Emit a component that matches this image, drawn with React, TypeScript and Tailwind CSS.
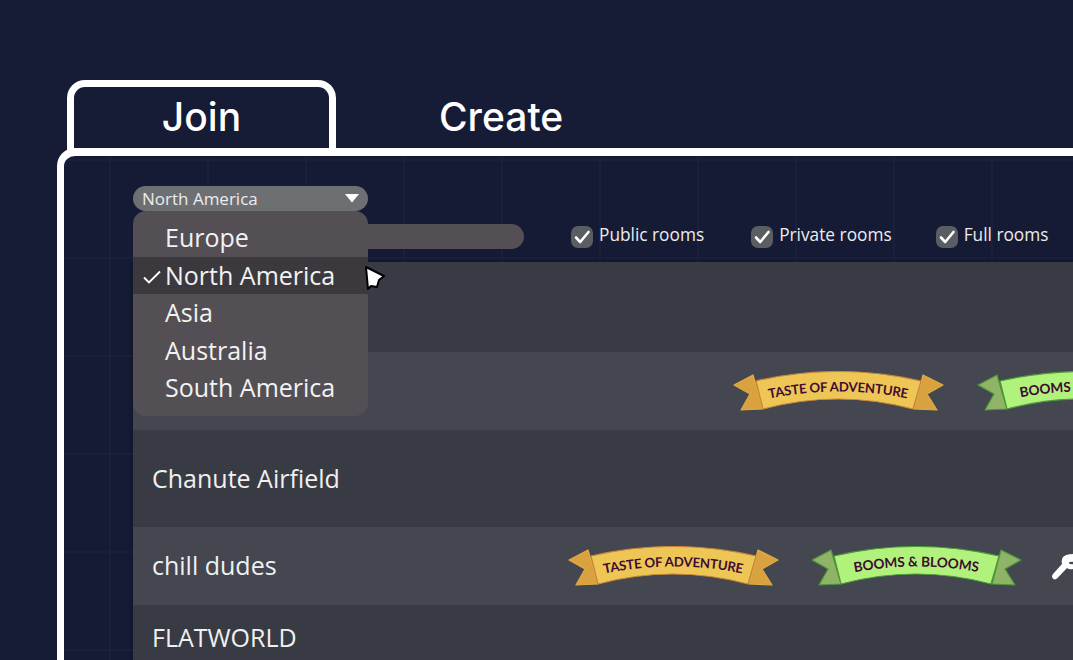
const regions = ["Europe", "North America", "Asia", "Australia", "South America"];

function Banner({ label, green, id }: { label: string; green?: boolean; id: string }) {
  const tail = green ? "#8fb468" : "#d9a23f";
  const tailEdge = green ? "#4f9638" : "#e0ab45";
  const main = green ? "#b1f27c" : "#edc655";
  const edge = green ? "#4c9a38" : "#c9863a";
  return (
    <svg width="212" height="40" viewBox="0 0 212 40" className="shrink-0">
      <path d="M1 14 L20 4 L30 38 L8 39 L17 23 Z" fill={tail} stroke={tailEdge} strokeWidth="1.2" strokeLinejoin="round" />
      <path d="M190 4 L210 14 L194 23 L204 39 L181 38 Z" fill={tail} stroke={tailEdge} strokeWidth="1.2" strokeLinejoin="round" />
      <path d="M23 10 Q105 -9 188 10 L180 38 Q105 18 30 38 Z" fill={main} stroke={edge} strokeWidth="1.2" strokeLinejoin="round" />
      <path id={id} d="M30 29 Q105 12 182 29" fill="none" />
      <text
        fontSize={green ? "13.6" : "13.2"}
        fontWeight="700"
        letterSpacing={green ? "-0.1" : "-0.2"}
        fill="#3f0b33"
        textAnchor="middle"
        className="[font-family:Lato,sans-serif]"
      >
        <textPath href={`#${id}`} startOffset="49.5%">
          {label}
        </textPath>
      </text>
    </svg>
  );
}

function Filter({ label, className }: { label: string; className: string }) {
  return (
    <div className={`flex items-center gap-[6px] self-start text-[17.3px] text-[#ececec] ${className}`}>
      <span className="flex h-[22px] w-[22px] items-center justify-center rounded-[7px] bg-[#5a5d62]">
        <svg width="18" height="18" viewBox="0 0 18 18" fill="none">
          <path d="M3 9.5 L7.2 14 L15.5 4" stroke="white" strokeWidth="2.6" strokeLinecap="round" strokeLinejoin="round" />
        </svg>
      </span>
      <span className="relative -top-[2px]">{label}</span>
    </div>
  );
}

export default function App() {
  return (
    <div className="h-[660px] w-[1073px] overflow-hidden bg-[#161c35] pl-[57px] pt-[80px] [font-family:'Open_Sans',sans-serif] text-white">
      {/* Tabs */}
      <div className="flex h-[68px] items-start pl-[10px] [font-family:Inter,sans-serif]">
        <div className="flex h-[70px] w-[269px] justify-center rounded-t-[18px] border-x-[7px] border-t-[7px] border-white pt-[7px] text-[39px] font-medium leading-[46px]">
          Join
        </div>
        <div className="ml-[103px] pt-[14px] text-[39px] font-medium leading-[46px]">Create</div>
      </div>

      {/* Panel */}
      <div className="relative h-[520px] w-[1100px] rounded-tl-[18px] border-l-[7px] border-t-[8px] border-white bg-[#151b34] bg-[linear-gradient(#1a203c_2px,transparent_2px),linear-gradient(90deg,#1a203c_2px,transparent_2px)] bg-[size:98px_98px] bg-[position:45px_3px] pl-[69px] pt-[30px]">
        {/* Region select */}
        <div className="relative z-10 w-[235px]">
          <div className="flex h-[25px] items-center justify-between rounded-full bg-[#6c7073] pl-[9px] pr-[9px] text-[17px] text-[#ececec]">
            North America
            <svg width="14" height="9" viewBox="0 0 14 9">
              <path d="M0 0 H14 L7 8.5 Z" fill="white" />
            </svg>
          </div>
          <div className="absolute left-0 top-[25px] w-[235px] rounded-[13px] bg-[#544f55] pb-[9px] pt-[8px] text-[25px] text-[#f2f2f2]">
            {regions.map((r) => (
              <div
                key={r}
                className={`relative flex h-[37.5px] items-center pl-[32px] ${r === "North America" ? "bg-[#3c393e]" : ""}`}
              >
                {r === "North America" && (
                  <svg width="18" height="14" viewBox="0 0 18 14" fill="none" className="absolute left-[10px] top-[13px]">
                    <path d="M1 7.5 L6 12.5 L17 1.5" stroke="white" strokeWidth="1.8" />
                  </svg>
                )}
                {r}
              </div>
            ))}
            {/* Pointer */}
            <svg width="24" height="27" viewBox="0 0 24 27" className="absolute left-[230px] top-[53px]">
              <path d="M3 3 L21 12 L16 16 L14 23 L8 22 L5 25 Z" fill="white" stroke="black" strokeWidth="2" strokeLinejoin="round" />
            </svg>
          </div>
        </div>

        {/* Search and filters */}
        <div className="mt-[13px] flex h-[25px] items-center">
          <div className="h-[25px] w-[391px] rounded-full bg-[#544f55]" />
          <Filter label="Public rooms" className="ml-[47px]" />
          <Filter label="Private rooms" className="ml-[47px]" />
          <Filter label="Full rooms" className="ml-[44px]" />
        </div>

        {/* Room list */}
        <div className="mt-[13px] w-[940px] text-[25px] text-[#f0f0f0] shadow-[0_0_6px_rgba(0,0,0,0.25)]">
          <div className="h-[90px] bg-[#393b44]" />
          <div className="flex h-[78px] items-center overflow-hidden bg-[#444750] pl-[600px]">
            <Banner id="t1" label="TASTE OF ADVENTURE" />
            <div className="ml-[32px]">
              <Banner id="b1" label="BOOMS & BLOOMS" green />
            </div>
          </div>
          <div className="flex h-[97px] items-center bg-[#393b44] pl-[19px]">Chanute Airfield</div>
          <div className="flex h-[78px] items-center overflow-hidden bg-[#444750] pl-[19px]">
            <div className="w-[416px] shrink-0">chill dudes</div>
            <Banner id="t2" label="TASTE OF ADVENTURE" />
            <div className="ml-[31px]">
              <Banner id="b2" label="BOOMS & BLOOMS" green />
            </div>
            <svg width="30" height="30" viewBox="0 0 30 30" className="ml-[27px] shrink-0">
              <path
                d="M13 6 Q16 3 23 3 L30 3 L30 10 L19 11 L19.5 13 L30 13.5 L30 18 L23 18 Q19 19 17 17 L7.5 27 Q5 29.5 3 27.5 Q1 25.5 3 23 L12 13 Q11 9 13 6 Z"
                fill="white"
              />
            </svg>
          </div>
          <div className="h-[80px] bg-[#393b44] pl-[19px] pt-[16px] leading-[32px]">FLATWORLD</div>
        </div>
      </div>
    </div>
  );
}
